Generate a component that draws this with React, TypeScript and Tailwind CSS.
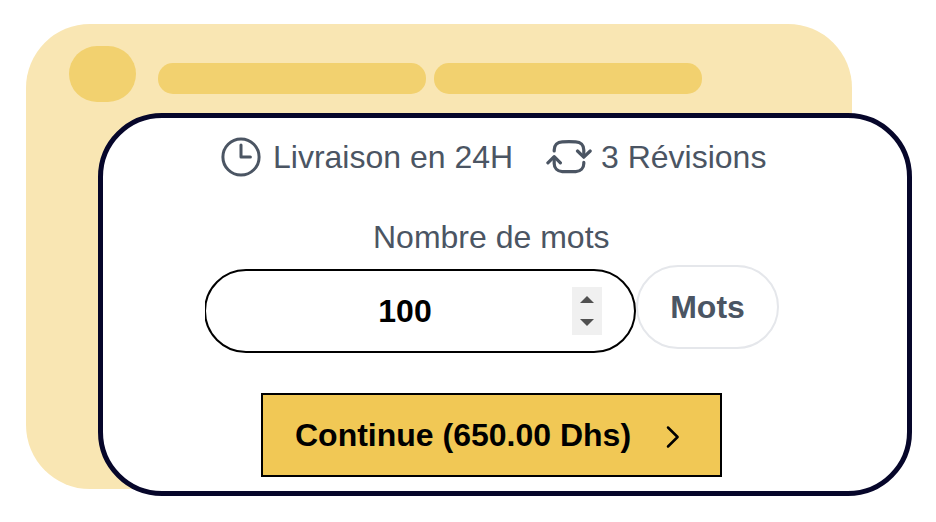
import React from "react";

function ClockIcon() {
  return (
    <svg width="40" height="40" viewBox="0 0 40 40" fill="none" stroke="currentColor" strokeWidth="3" strokeLinecap="round" strokeLinejoin="round" className="block shrink-0">
      <circle cx="20" cy="20" r="18.1" />
      <path d="M20 8v12h9.4" />
    </svg>
  );
}

function RevisionIcon() {
  return (
    <svg width="46" height="36" viewBox="0 0 46 36" fill="none" stroke="currentColor" strokeWidth="3.2" strokeLinecap="round" strokeLinejoin="round" className="block shrink-0">
      <path d="M8.2 12V11C8.2 6.2 11.4 3 16.2 2.8Q23 2.6 29.8 2.8C34.6 3 37.8 6.2 37.8 11V17.5" />
      <path d="M37.8 23.4V24.4C37.8 29.2 34.6 32.4 29.8 32.6Q23 32.8 16.2 32.6C11.4 32.4 8.2 29.2 8.2 24.4V18" />
      <path d="M31.5 12L37.8 18.2L44.2 12M1.9 23.8L8.2 17.6L14.4 23.8" />
    </svg>
  );
}

function Placeholder() {
  return (
    <div className="ml-[26px] flex h-[465px] w-[826px] items-start rounded-[64px] bg-[#f9e6b3] pl-[43px] pt-[22px]">
      <div className="h-14 w-[67px] rounded-[28px] bg-[#f2d16f]" />
      <div className="ml-[22px] mt-[17px] flex gap-2">
        <div className="h-[31px] w-[268px] rounded-[15px] bg-[#f2d16f]" />
        <div className="h-[31px] w-[268px] rounded-[15px] bg-[#f2d16f]" />
      </div>
    </div>
  );
}

function OrderCard() {
  return (
    <div className="absolute left-[98px] top-[113px] h-[383px] w-[814px] rounded-[64px] border-[5px] border-[#06062a] bg-white text-[32px] leading-10 text-[#4b5563]">
      <div className="ml-[118px] mt-[19px] flex h-10 items-center whitespace-nowrap">
        <ClockIcon />
        <span className="ml-3 w-[273px]">Livraison en 24H</span>
        <RevisionIcon />
        <span className="ml-[9px]">3 Révisions</span>
      </div>
      <label htmlFor="words" className="ml-[270px] mt-10 block whitespace-nowrap">
        Nombre de mots
      </label>
      <div className="ml-[102px] mt-[8px] flex items-start">
        <div className="mt-1 flex w-[431px] justify-end overflow-hidden">
          <div className="flex h-[84px] w-[432px] shrink-0 items-center rounded-[42px] border-2 border-black bg-white pl-8 pr-8">
            <input id="words" defaultValue="100" className="w-[334px] bg-transparent text-center font-bold text-black outline-none" />
            <div className="flex h-12 w-[30px] flex-col items-center justify-between bg-[#f0f0f0] py-[9px] text-[#505050]">
              <svg width="14" height="7" viewBox="0 0 14 7" fill="currentColor"><path d="M0 7L7 0L14 7Z" /></svg>
              <svg width="14" height="7" viewBox="0 0 14 7" fill="currentColor"><path d="M0 0L7 7L14 0Z" /></svg>
            </div>
          </div>
        </div>
        <div className="flex h-[84px] w-[143px] items-center justify-center rounded-[42px] border-2 border-[#e5e7eb] font-bold">
          Mots
        </div>
      </div>
      <button className="ml-[158px] mt-10 flex h-[84px] w-[461px] items-center whitespace-nowrap border-2 border-black bg-[#f1c855] pl-8 text-left font-bold text-black">
        <span className="w-[371px]">Continue (650.00 Dhs)</span>
        <svg width="14" height="24" viewBox="0 0 14 24" fill="none" stroke="currentColor" strokeWidth="2.5" strokeLinecap="round" strokeLinejoin="round" className="mt-[4px]">
          <path d="M2 2.5L11.6 12L2 21.5" />
        </svg>
      </button>
    </div>
  );
}

export default function App() {
  return (
    <main className="relative h-[522px] w-[936px] overflow-hidden bg-white pt-6 font-['Liberation_Sans',Arial,sans-serif]">
      <Placeholder />
      <OrderCard />
    </main>
  );
}
